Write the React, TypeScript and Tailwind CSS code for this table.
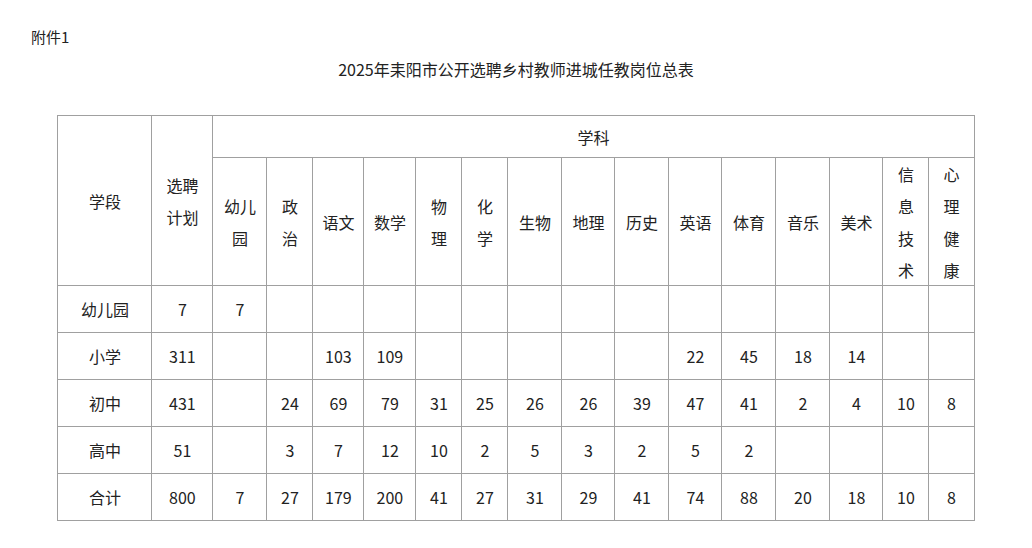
const SUBJECTS: string[][] = [
  ["幼儿", "园"],
  ["政", "治"],
  ["语文"],
  ["数学"],
  ["物", "理"],
  ["化", "学"],
  ["生物"],
  ["地理"],
  ["历史"],
  ["英语"],
  ["体育"],
  ["音乐"],
  ["美术"],
  ["信", "息", "技", "术"],
  ["心", "理", "健", "康"],
];

const COL_WIDTHS = [94, 61, 54, 46, 51, 52, 46, 46, 54, 53, 54, 53, 54, 54, 53, 46, 45];

type Row = { stage: string; plan: string; values: string[] };

const ROWS: Row[] = [
  { stage: "幼儿园", plan: "7", values: ["7", "", "", "", "", "", "", "", "", "", "", "", "", "", ""] },
  { stage: "小学", plan: "311", values: ["", "", "103", "109", "", "", "", "", "", "22", "45", "18", "14", "", ""] },
  { stage: "初中", plan: "431", values: ["", "24", "69", "79", "31", "25", "26", "26", "39", "47", "41", "2", "4", "10", "8"] },
  { stage: "高中", plan: "51", values: ["", "3", "7", "12", "10", "2", "5", "3", "2", "5", "2", "", "", "", ""] },
  { stage: "合计", plan: "800", values: ["7", "27", "179", "200", "41", "27", "31", "29", "41", "74", "88", "20", "18", "10", "8"] },
];

const cell = "border border-[#a0a0a0] text-center align-middle p-0 font-normal";

function Lines({ lines }: { lines: string[] }) {
  return (
    <div className="leading-[32px]">
      {lines.map((l) => (
        <div key={l}>{l}</div>
      ))}
    </div>
  );
}

export default function App() {
  return (
    <div
      className="min-h-[548px] w-[1032px] bg-white text-[15px] text-[#222]"
      style={{ fontFamily: '"Noto Sans CJK SC", "Noto Sans", sans-serif' }}
    >
      <div className="pl-[31px] pt-[26px] leading-[22px]">附件1</div>
      <h1 className="mt-[10px] text-center text-[16px] font-normal leading-[22px]">
        2025年耒阳市公开选聘乡村教师进城任教岗位总表
      </h1>

      <table className="mx-auto mt-[35px] w-[917px] table-fixed border-collapse text-[16px]">
        <colgroup>
          {COL_WIDTHS.map((w, i) => (
            <col key={i} style={{ width: w }} />
          ))}
        </colgroup>
        <thead>
          <tr className="h-[42px]">
            <th rowSpan={2} className={cell}>
              学段
            </th>
            <th rowSpan={2} className={cell}>
              <Lines lines={["选聘", "计划"]} />
            </th>
            <th colSpan={15} className={cell}>
              学科
            </th>
          </tr>
          <tr className="h-[128px]">
            {SUBJECTS.map((s, i) => (
              <th key={i} className={`${cell} py-0`}>
                <div className="-my-px">
                  <Lines lines={s} />
                </div>
              </th>
            ))}
          </tr>
        </thead>
        <tbody>
          {ROWS.map((r) => (
            <tr key={r.stage} className="h-[47px]">
              <td className={cell}>{r.stage}</td>
              <td className={cell}>{r.plan}</td>
              {r.values.map((v, i) => (
                <td key={i} className={cell}>
                  {v}
                </td>
              ))}
            </tr>
          ))}
        </tbody>
      </table>
    </div>
  );
}
